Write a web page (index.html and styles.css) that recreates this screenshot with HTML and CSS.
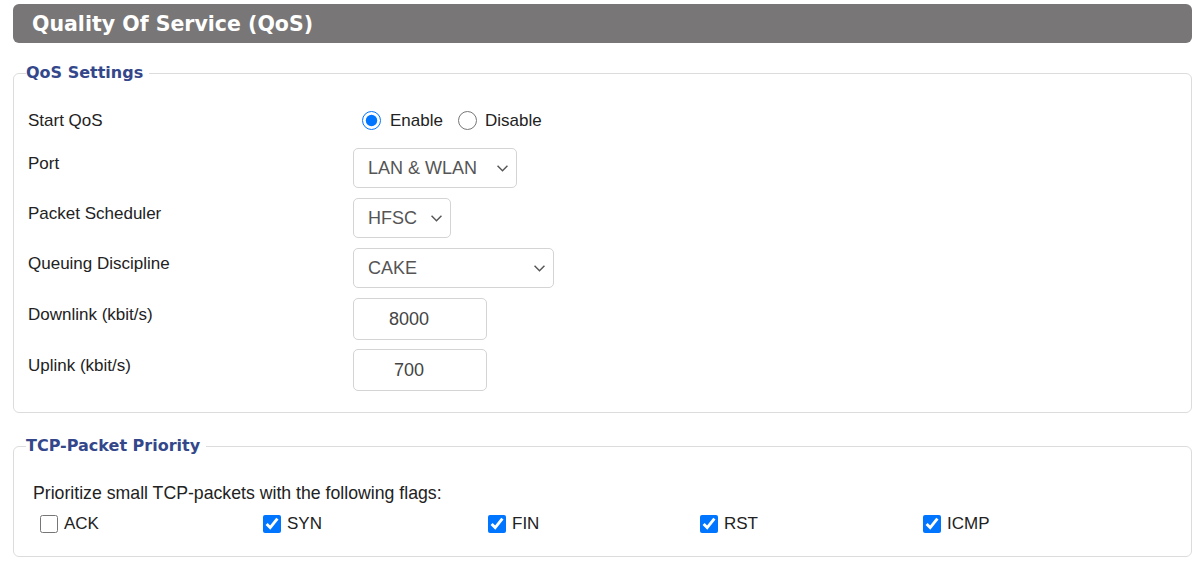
FILE: index.html
```html
<!DOCTYPE html>
<html lang="en">
<head>
    <meta charset="UTF-8">
    <meta name="viewport" content="width=device-width, initial-scale=1.0">
    <title>Quality Of Service (QoS)</title>
    <link rel="stylesheet" href="styles.css">
</head>
<body>
    <div class="page">
        <div class="title-bar">Quality Of Service (QoS)</div>

        <fieldset class="box">
            <legend>QoS Settings</legend>

            <div class="row row-radio">
                <label class="row-label">Start QoS</label>
                <div class="radios">
                    <input type="radio" name="qos" id="qosOn" checked>
                    <label for="qosOn">Enable</label>
                    <input type="radio" name="qos" id="qosOff">
                    <label for="qosOff">Disable</label>
                </div>
            </div>

            <div class="row">
                <label class="row-label">Port</label>
                <div class="select select-port">
                    <select><option>LAN &amp; WLAN</option></select>
                    <svg class="chevron" viewBox="0 0 10 6"><path d="M0.5 0.5 L5 5 L9.5 0.5" /></svg>
                </div>
            </div>

            <div class="row">
                <label class="row-label">Packet Scheduler</label>
                <div class="select select-sched">
                    <select><option>HFSC</option></select>
                    <svg class="chevron" viewBox="0 0 10 6"><path d="M0.5 0.5 L5 5 L9.5 0.5" /></svg>
                </div>
            </div>

            <div class="row">
                <label class="row-label">Queuing Discipline</label>
                <div class="select select-queue">
                    <select><option>CAKE</option></select>
                    <svg class="chevron" viewBox="0 0 10 6"><path d="M0.5 0.5 L5 5 L9.5 0.5" /></svg>
                </div>
            </div>

            <div class="row row-input">
                <label class="row-label">Downlink (kbit/s)</label>
                <input type="text" class="num" value="8000">
            </div>

            <div class="row row-input last">
                <label class="row-label">Uplink (kbit/s)</label>
                <input type="text" class="num" value="700">
            </div>
        </fieldset>

        <fieldset class="box box-tcp">
            <legend>TCP-Packet Priority</legend>
            <p class="hint">Prioritize small TCP-packets with the following flags:</p>
            <div class="flags">
                <label class="flag"><input type="checkbox">ACK</label>
                <label class="flag"><input type="checkbox" checked>SYN</label>
                <label class="flag"><input type="checkbox" checked>FIN</label>
                <label class="flag"><input type="checkbox" checked>RST</label>
                <label class="flag"><input type="checkbox" checked>ICMP</label>
            </div>
        </fieldset>
    </div>
</body>
</html>
```

FILE: styles.css
```css
body {
    margin: 0;
    font-family: "Liberation Sans", Arial, sans-serif;
    font-size: 17px;
    color: #222;
    background-color: #fff;
}

.page {
    padding: 4px 8px 0 13px;
}

.title-bar {
    height: 39px;
    line-height: 41px;
    padding-left: 19px;
    background-color: #787676;
    border-radius: 6px;
    color: #fff;
    font-family: "DejaVu Sans", Verdana, sans-serif;
    font-weight: bold;
    font-size: 20.5px;
}

.box {
    margin: 20px 0 0 0;
    padding: 21px 14px 21px 14px;
    border: 1px solid #dcdcdc;
    border-radius: 6px;
}

.box legend {
    padding: 0 6px 0 0;
    margin-left: -2px;
    line-height: 20px;
    font-family: "DejaVu Sans", Verdana, sans-serif;
    font-weight: bold;
    font-size: 16px;
    color: #34478a;
}

.row {
    display: flex;
    align-items: flex-start;
    margin-bottom: 10px;
}

.row.last {
    margin-bottom: 0;
}

.row-label {
    width: 325px;
    flex: 0 0 325px;
    padding-top: 4px;
    line-height: 24px;
}

.row-radio {
    height: 32px;
    align-items: center;
    margin-bottom: 12px;
}

.row-radio .row-label {
    padding-top: 1px;
}

.row-input {
    margin-bottom: 9px;
}

.row-input .row-label {
    padding-top: 5px;
}

.radios {
    display: flex;
    align-items: center;
    line-height: 24px;
    padding-top: 1px;
}

.radios input {
    width: 19px;
    height: 19px;
    margin: 0 9px 0 9px;
    accent-color: #0075ff;
}

.radios input + label + input {
    margin-left: 15px;
    margin-right: 8px;
}

.select {
    position: relative;
    height: 40px;
}

.select select {
    appearance: none;
    -webkit-appearance: none;
    width: 100%;
    height: 40px;
    padding: 0 0 0 14px;
    border: 1px solid #d4d4d4;
    border-radius: 5px;
    background-color: #fff;
    color: #555;
    font-family: "Liberation Sans", Arial, sans-serif;
    font-size: 18px;
}

.select-port { width: 164px; }
.select-sched { width: 98px; }
.select-queue { width: 201px; }

.chevron {
    position: absolute;
    right: 9px;
    top: 17px;
    width: 11px;
    height: 7px;
    fill: none;
    stroke: #555;
    stroke-width: 1.3;
    pointer-events: none;
}

.num {
    box-sizing: border-box;
    width: 134px;
    height: 42px;
    padding: 0 22px 0 0;
    border: 1px solid #d4d4d4;
    border-radius: 5px;
    text-align: center;
    color: #444;
    font-family: "Liberation Sans", Arial, sans-serif;
    font-size: 18px;
}

.box-tcp {
    margin-top: 23px;
    padding: 25px 14px 20px 14px;
}

.hint {
    margin: 0 0 6px 5px;
    line-height: 24px;
    font-size: 17.7px;
}

.flags {
    display: grid;
    grid-template-columns: 223px 225px 212px 223px auto;
    line-height: 24px;
    padding-left: 8px;
    padding-top: 1px;
}

.flag {
    display: flex;
    align-items: center;
    font-size: 17px;
}

.flag input {
    width: 18px;
    height: 18px;
    margin: 0 6px 0 4px;
    accent-color: #0075ff;
}
```
